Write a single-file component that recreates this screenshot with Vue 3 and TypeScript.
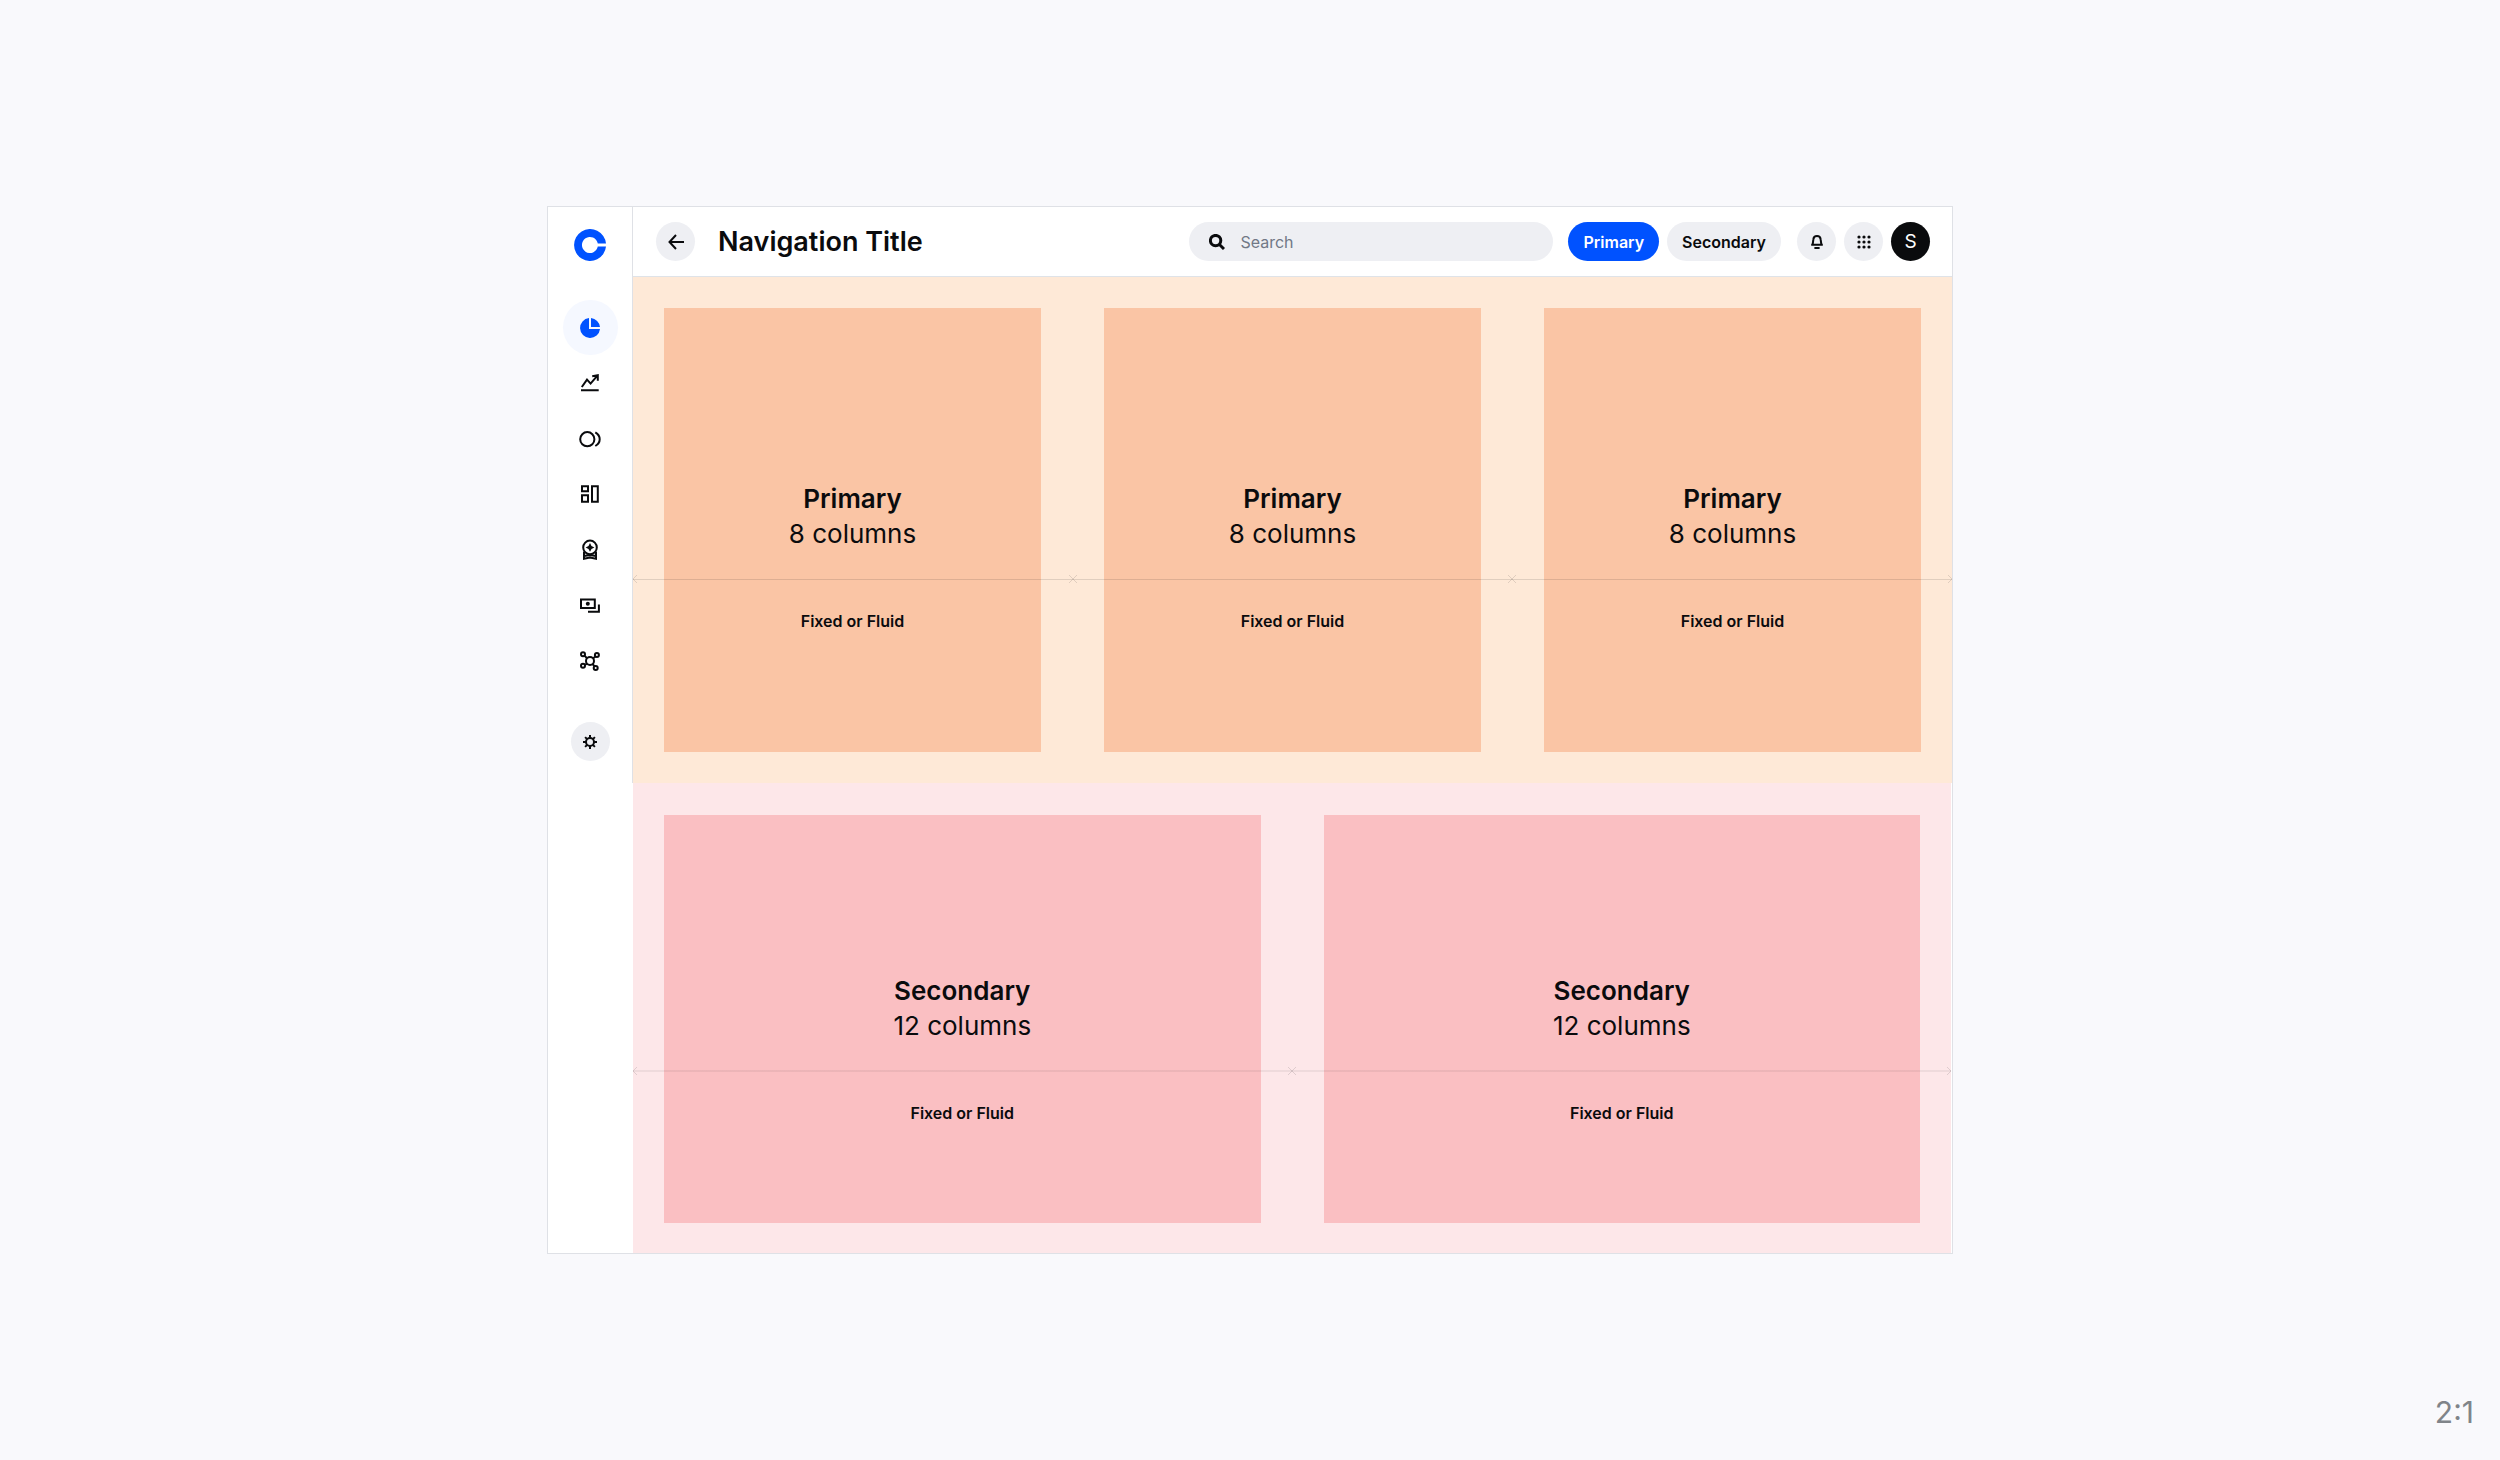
<script setup lang="ts">
interface Section {
  id: string
  title: string
  columns: string
  count: number
}

const sections: Section[] = [
  { id: 'primary', title: 'Primary', columns: '8 columns', count: 3 },
  { id: 'secondary', title: 'Secondary', columns: '12 columns', count: 2 },
]
</script>

<template>
  <div class="page">
    <div class="frame">
      <aside class="sidebar">
        <a class="logo" href="#" aria-label="Home">
          <svg width="32" height="32" viewBox="0 0 32 32">
            <path fill="#0052ff" d="M32 14.5H23.8A8 8 0 1 0 23.8 17.5H32A16 16 0 1 1 32 14.5Z" />
          </svg>
        </a>
        <nav class="nav" aria-label="Main">
          <a class="nav-item active" href="#" aria-label="Assets">
            <svg class="icon" viewBox="0 0 24 24">
              <path fill="currentColor" d="M11 2V13H22A10 10 0 1 1 11 2ZM13 2A10 10 0 0 1 22 11H13Z" />
            </svg>
          </a>
          <a class="nav-item" href="#" aria-label="Trade">
            <svg class="icon line" viewBox="0 0 24 24">
              <path d="M3 19.3H20.7M3.8 16L9 8.6L12.6 12.6L19.4 4.6M14.2 5.2L19.8 4.2L19.8 9.8" />
            </svg>
          </a>
          <a class="nav-item" href="#" aria-label="Pay">
            <svg class="icon line" viewBox="0 0 24 24">
              <circle cx="9.3" cy="12.2" r="7.1" />
              <path d="M17.3 5.4C20 7 21.7 9.4 21.7 12.2S20 17.4 17.3 19" />
            </svg>
          </a>
          <a class="nav-item" href="#" aria-label="Dashboard">
            <svg class="icon line" viewBox="0 0 24 24">
              <path d="M4 4.3H10V9.2H4ZM4 13.2H10V19.8H4ZM14 4.3H19.8V19.8H14Z" />
            </svg>
          </a>
          <a class="nav-item" href="#" aria-label="Rewards">
            <svg class="icon line" viewBox="0 0 24 24">
              <circle cx="12" cy="9.4" r="6.8" />
              <path d="M6 13.5V20.8L12 19.6L18 20.8V13.5M6 18L12 17L18 18" />
              <path class="solid" d="M12 5L13.5 7.9L16.4 9.4L13.5 10.9L12 13.8L10.5 10.9L7.6 9.4L10.5 7.9Z" />
            </svg>
          </a>
          <a class="nav-item" href="#" aria-label="Cash">
            <svg class="icon line" viewBox="0 0 24 24">
              <path d="M3 5.5H16.8V14H3ZM10 17.7H20.9V10.4" />
              <circle class="solid" cx="9.8" cy="9.8" r="2" />
            </svg>
          </a>
          <a class="nav-item" href="#" aria-label="Network">
            <svg class="icon line" viewBox="0 0 24 24">
              <circle cx="12" cy="12" r="4" />
              <circle cx="5" cy="5.2" r="2" />
              <circle cx="18.9" cy="6" r="2" />
              <circle cx="5" cy="16.8" r="2" />
              <circle cx="17.7" cy="19" r="2" />
              <path d="M6.5 6.6L9 9.2M17.4 7.4L15 9.4M6.8 16L9 14.6M16.8 17.4L14.4 15" />
            </svg>
          </a>
        </nav>
        <button class="round" type="button" aria-label="Settings">
          <svg width="16" height="16" viewBox="0 0 16 16" class="line">
            <circle cx="8" cy="8" r="4" />
            <path
              d="M8 1V4M8 12V15M1 8H4M12 8H15M3.1 3.1L5.1 5.1M10.9 10.9L12.9 12.9M3.1 12.9L5.1 10.9M10.9 5.1L12.9 3.1"
            />
          </svg>
        </button>
      </aside>

      <main class="main">
        <header class="header">
          <button class="round" type="button" aria-label="Back">
            <svg width="16" height="16" viewBox="0 0 16 16" class="line">
              <path d="M16 8H1.5M8 1L1.5 8L8 15" />
            </svg>
          </button>
          <h1 class="heading">Navigation Title</h1>
          <label class="search">
            <svg width="16" height="16" viewBox="0 0 16 16" class="lens">
              <circle cx="6.6" cy="6.6" r="5.2" />
              <path d="M10.2 10.2L15 15" />
            </svg>
            <input type="search" placeholder="Search" aria-label="Search" />
          </label>
          <div class="actions">
            <button class="pill blue" type="button">Primary</button>
            <button class="pill" type="button">Secondary</button>
          </div>
          <div class="tools">
            <button class="round" type="button" aria-label="Notifications">
              <svg width="16" height="16" viewBox="0 0 16 16" class="line">
                <path d="M2.2 10.8H13.8M3.6 10.8L4.4 5.2C4.6 3.2 6 2 8 2S11.4 3.2 11.6 5.2L12.4 10.8M5.4 14H10.6" />
              </svg>
            </button>
            <button class="round" type="button" aria-label="Apps">
              <svg width="16" height="16" viewBox="0 0 16 16">
                <template v-for="row in 3" :key="row">
                  <circle
                    v-for="col in 3"
                    :key="col"
                    :cx="col * 5 - 2"
                    :cy="row * 5 - 2"
                    r="1.6"
                    fill="currentColor"
                  />
                </template>
              </svg>
            </button>
            <button class="round avatar" type="button">S</button>
          </div>
        </header>

        <section v-for="section in sections" :key="section.id" class="section" :class="section.id">
          <article v-for="n in section.count" :key="n" class="card">
            <h2>{{ section.title }}</h2>
            <p class="columns">{{ section.columns }}</p>
            <p class="note">Fixed or Fluid</p>
          </article>
          <div class="measure" aria-hidden="true">
            <div v-for="n in section.count" :key="n" class="span">
              <svg width="4" height="8" viewBox="0 0 4 8"><path d="M4 0L0 4L4 8" /></svg>
              <svg width="4" height="8" viewBox="0 0 4 8"><path d="M0 0L4 4L0 8" /></svg>
            </div>
          </div>
        </section>
      </main>
    </div>
    <footer class="ratio">2:1</footer>
  </div>
</template>

<style>
body {
  margin: 0;
  background: #f9f9fc;
}
</style>

<style scoped>
.page {
  box-sizing: border-box;
  min-height: 100vh;
  display: grid;
  grid-template-rows: 1fr auto 1fr;
  font-family: Inter, 'Liberation Sans', sans-serif;
  color: #0a0b0d;
  background: #f9f9fc;
}

.frame {
  grid-row: 2;
  box-sizing: border-box;
  width: 56.24%;
  margin: 0 auto;
  display: flex;
  border: 1px solid #dfe1e6;
  background: #fff;
}

.sidebar {
  flex: none;
  width: 84px;
  display: flex;
  flex-direction: column;
  align-items: center;
  padding-top: 22px;
}

.logo {
  display: block;
  height: 32px;
}

.nav {
  height: 389px;
  margin: 39px 0 33px;
  display: flex;
  flex-direction: column;
  justify-content: space-between;
}

.nav-item {
  width: 55px;
  height: 55px;
  display: flex;
  align-items: center;
  justify-content: center;
  border-radius: 50%;
  color: inherit;
}

.nav-item.active {
  background: #f5f8ff;
  color: #0052ff;
}

.icon {
  width: 24px;
  height: 24px;
}

.line {
  fill: none;
  stroke: currentColor;
  stroke-width: 2;
}

.solid {
  fill: currentColor;
  stroke: none;
}

.round {
  flex: none;
  width: 39px;
  height: 39px;
  padding: 0;
  display: flex;
  align-items: center;
  justify-content: center;
  border: 0;
  border-radius: 50%;
  background: #eeeff3;
  color: inherit;
}

.main {
  flex: 1;
  min-width: 0;
}

.header {
  height: 69px;
  padding: 0 22px 0 23px;
  display: flex;
  align-items: center;
  border-left: 1px solid #dfe1e6;
  border-bottom: 1px solid #dfe3e8;
}

.heading {
  margin: 0 auto 0 23px;
  font-size: 27px;
  line-height: 35px;
  font-weight: 600;
  white-space: nowrap;
}

.search {
  box-sizing: border-box;
  flex: 0 1 364px;
  min-width: 0;
  height: 39px;
  padding: 0 20px;
  display: flex;
  align-items: center;
  gap: 15px;
  border-radius: 20px;
  background: #eeeff3;
}

.search input {
  flex: 1;
  min-width: 0;
  padding: 0;
  border: 0;
  outline: 0;
  background: transparent;
  font: 400 16px/24px Inter, 'Liberation Sans', sans-serif;
  color: inherit;
}

.search input::placeholder {
  color: #717886;
  opacity: 1;
}

.lens {
  flex: none;
  fill: none;
  stroke: currentColor;
  stroke-width: 3;
}

.actions {
  display: flex;
  gap: 8px;
  margin: 0 16px 0 15px;
}

.pill {
  height: 39px;
  padding: 0 15px;
  border: 0;
  border-radius: 20px;
  background: #eeeff3;
  color: inherit;
  font: 600 16px/24px Inter, 'Liberation Sans', sans-serif;
}

.pill.blue {
  background: #0052ff;
  color: #fff;
}

.tools {
  display: flex;
  gap: 8px;
}

.avatar {
  background: #0a0b0d;
  color: #fff;
  font: 400 19px/24px Inter, 'Liberation Sans', sans-serif;
}

.section {
  position: relative;
  display: flex;
  gap: 63px;
  border-left: 1px solid transparent;
}

.primary {
  padding: 31px;
  border-left-color: #dfe1e6;
  background: #fee9d7;
}

.secondary {
  padding: 32px 31px 30px;
  border-left-color: #fff;
  border-right: 1px solid #fff;
  background: #fde7e9;
}

.card {
  box-sizing: border-box;
  flex: 1;
  text-align: center;
}

.primary .card {
  min-height: 444px;
  padding-top: 173px;
  background: #fac5a5;
}

.secondary .card {
  min-height: 408px;
  padding-top: 158px;
  background: #fabfc2;
}

.card h2,
.card p {
  margin: 0;
}

.card h2,
.card .columns {
  font-size: 26px;
  line-height: 35px;
}

.card h2 {
  font-weight: 600;
}

.card .note {
  margin-top: 58px;
  font-size: 16px;
  line-height: 24px;
  font-weight: 600;
}

/* Dimension line with arrowheads, drawn across the cards */
.measure {
  position: absolute;
  left: 0;
  right: 0;
  height: 8px;
  display: flex;
}

.primary .measure {
  top: 298px;
}

.secondary .measure {
  top: 284px;
}

.span {
  flex: 1;
  display: flex;
  justify-content: space-between;
  background: linear-gradient(rgba(10, 11, 13, 0.12), rgba(10, 11, 13, 0.12)) center / 100% 1px no-repeat;
}

.secondary .span {
  background-image: linear-gradient(rgba(10, 11, 13, 0.06), rgba(10, 11, 13, 0.06));
  background-size: 100% 2px;
}

.span svg {
  overflow: visible;
  fill: none;
  stroke: rgba(10, 11, 13, 0.12);
}

.ratio {
  grid-row: 3;
  align-self: end;
  padding: 0 26px 28px;
  text-align: right;
  font-size: 30px;
  line-height: 40px;
  color: #808489;
}
</style>
